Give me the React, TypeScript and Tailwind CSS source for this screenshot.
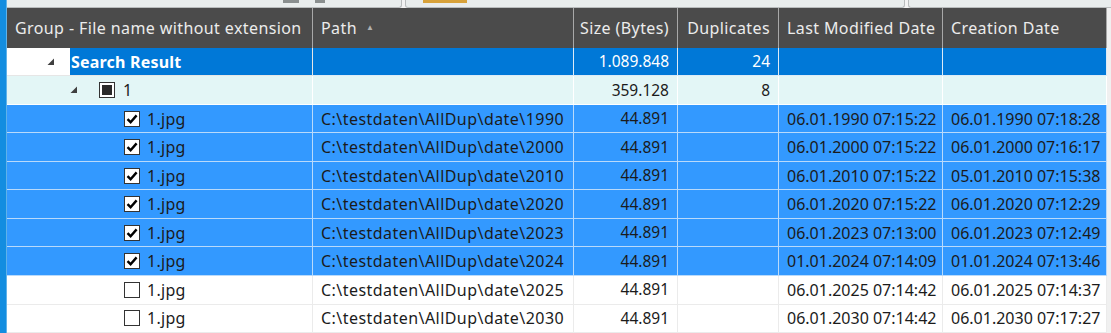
import { Fragment } from 'react';

// Column definitions for the duplicate grid
const columns = [
  { key: 'group', label: 'Group - File name without extension', width: 'w-[306px]', align: 'text-left' },
  { key: 'path', label: 'Path', width: 'w-[261px]', align: 'text-left' },
  { key: 'size', label: 'Size (Bytes)', width: 'w-[104px]', align: 'text-right' },
  { key: 'dups', label: 'Duplicates', width: 'w-[101px]', align: 'text-right' },
  { key: 'modified', label: 'Last Modified Date', width: 'w-[164px]', align: 'text-left' },
  { key: 'created', label: 'Creation Date', width: 'w-[164px]', align: 'text-left' },
];

interface FileRow {
  year: string;
  checked: boolean;
  modified: string;
  created: string;
}

const files: FileRow[] = [
  { year: '1990', checked: true, modified: '06.01.1990 07:15:22', created: '06.01.1990 07:18:28' },
  { year: '2000', checked: true, modified: '06.01.2000 07:15:22', created: '06.01.2000 07:16:17' },
  { year: '2010', checked: true, modified: '06.01.2010 07:15:22', created: '05.01.2010 07:15:38' },
  { year: '2020', checked: true, modified: '06.01.2020 07:15:22', created: '06.01.2020 07:12:29' },
  { year: '2023', checked: true, modified: '06.01.2023 07:13:00', created: '06.01.2023 07:12:49' },
  { year: '2024', checked: true, modified: '01.01.2024 07:14:09', created: '01.01.2024 07:13:46' },
  { year: '2025', checked: false, modified: '06.01.2025 07:14:42', created: '06.01.2025 07:14:37' },
  { year: '2030', checked: false, modified: '06.01.2030 07:14:42', created: '06.01.2030 07:17:27' },
];

function Expander() {
  return (
    <svg width="8" height="8" viewBox="0 0 8 8" className="shrink-0">
      <polygon points="7,0.5 7,7 0.5,7" fill="#404040" />
    </svg>
  );
}

function CheckBox({ state }: { state: 'on' | 'off' | 'mixed' }) {
  return (
    <span className="w-[16px] h-[16px] shrink-0 border-[1.5px] border-[#333] bg-white flex items-center justify-center">
      {state === 'on' && (
        <svg width="12" height="12" viewBox="0 0 12 12">
          <path d="M1.5 6.2 L4.6 9.2 L10.6 2.4" fill="none" stroke="#000" strokeWidth="2.4" />
        </svg>
      )}
      {state === 'mixed' && <span className="w-[10px] h-[10px] bg-[#2a2a2a]" />}
    </span>
  );
}

export default function App() {
  const cell = 'h-full border-r border-b px-2 flex items-center shrink-0 whitespace-nowrap';

  return (
    <div
      className="w-[1111px] h-[333px] overflow-hidden flex bg-[#f0f0f0] text-[16px] text-[#1b1b1b]"
      style={{ fontFamily: '"Noto Sans", "Open Sans", sans-serif' }}
    >
      {/* desktop edge */}
      <div className="w-[7px] shrink-0 bg-[#138de0] border-r border-[#5fb2ea]" />

      <div className="flex-1 flex flex-col">
        {/* bottom of the toolbar above */}
        <div className="h-[8px] flex bg-[#f3f3f3]">
          <div className="w-[395px] border-b border-r border-[#b9bcbd] rounded-br-[3px] bg-[#e9eded] flex items-start">
            <span className="ml-[276px] w-[16px] h-[3px] bg-[#8a8f8f]" />
            <span className="ml-[16px] w-[10px] h-[3px] bg-[#8a8f8f]" />
          </div>
          <div className="w-[500px] ml-[3px] border-b border-r border-l border-[#b9bcbd] rounded-b-[3px] bg-[#e9eded] flex items-start">
            <span className="ml-[17px] w-[44px] h-[3px] bg-[#d8a23a]" />
          </div>
          <div className="flex-1 ml-[3px] border-b border-l border-[#b9bcbd] rounded-bl-[3px] bg-[#e9eded]" />
        </div>

        {/* header */}
        <div className="h-[40px] flex bg-[#f0f0f0]">
          {columns.map((c) => (
            <div
              key={c.key}
              className={`${c.width} h-full shrink-0 bg-[#4b4b4b] border-r border-[#a8a8a8] text-[#ececec] tracking-[0.4px] flex items-center px-2 ${
                c.align === 'text-right' ? 'justify-end' : ''
              }`}
            >
              <span className="whitespace-nowrap">{c.label}</span>
              {c.key === 'path' && <span className="ml-[9px] text-[8px] text-[#b0b0b0] mt-[-2px]">▲</span>}
            </div>
          ))}
        </div>

        {/* Search Result */}
        <div className="h-[28.6px] flex">
          <div className={`${cell} w-[306px] bg-white border-[#e6e6e6] !px-0`}>
            <div className="w-[63px] h-full flex items-center justify-end pr-[15px] bg-white">
              <Expander />
            </div>
            <div className="flex-1 h-full bg-[#0078d7] flex items-center px-[1px] font-bold text-white tracking-[0.2px]">
              Search Result
            </div>
          </div>
          <div className={`${cell} w-[261px] bg-[#0078d7] border-[#dcebf7]`} />
          <div className={`${cell} w-[104px] bg-[#0078d7] border-[#dcebf7] justify-end text-white text-[15.5px]`}>1.089.848</div>
          <div className={`${cell} w-[101px] bg-[#0078d7] border-[#dcebf7] justify-end text-white text-[15.5px]`}>24</div>
          <div className={`${cell} w-[164px] bg-[#0078d7] border-[#dcebf7]`} />
          <div className={`${cell} w-[164px] bg-[#0078d7] border-[#dcebf7]`} />
        </div>

        {/* Group 1 */}
        <div className="h-[28.6px] flex">
          <div className={`${cell} w-[306px] bg-[#e3f6f6] border-white !pl-[63px]`}>
            <Expander />
            <span className="ml-[21px]">
              <CheckBox state="mixed" />
            </span>
            <span className="ml-[8px]">1</span>
          </div>
          <div className={`${cell} w-[261px] bg-[#e3f6f6] border-white`} />
          <div className={`${cell} w-[104px] bg-[#e3f6f6] border-white justify-end text-[15.5px]`}>359.128</div>
          <div className={`${cell} w-[101px] bg-[#e3f6f6] border-white justify-end text-[15.5px]`}>8</div>
          <div className={`${cell} w-[164px] bg-[#e3f6f6] border-white`} />
          <div className={`${cell} w-[164px] bg-[#e3f6f6] border-white`} />
        </div>

        {/* Files */}
        {files.map((f) => {
          const bg = f.checked ? 'bg-[#3399ff] border-[#b9dafb]' : 'bg-white border-[#ebebeb]';
          return (
            <Fragment key={f.year}>
              <div className="h-[28.6px] flex">
                <div className={`${cell} w-[306px] ${bg} !pl-[117px]`}>
                  <CheckBox state={f.checked ? 'on' : 'off'} />
                  <span className="ml-[7px] tracking-[0.3px]">1.jpg</span>
                </div>
                <div className={`${cell} w-[261px] ${bg} tracking-[0.45px]`}>{`C:\\testdaten\\AllDup\\date\\${f.year}`}</div>
                <div className={`${cell} w-[104px] ${bg} justify-end text-[15.5px]`}>44.891</div>
                <div className={`${cell} w-[101px] ${bg}`} />
                <div className={`${cell} w-[164px] ${bg}`}>{f.modified}</div>
                <div className={`${cell} w-[164px] ${bg}`}>{f.created}</div>
              </div>
            </Fragment>
          );
        })}
      </div>
    </div>
  );
}
